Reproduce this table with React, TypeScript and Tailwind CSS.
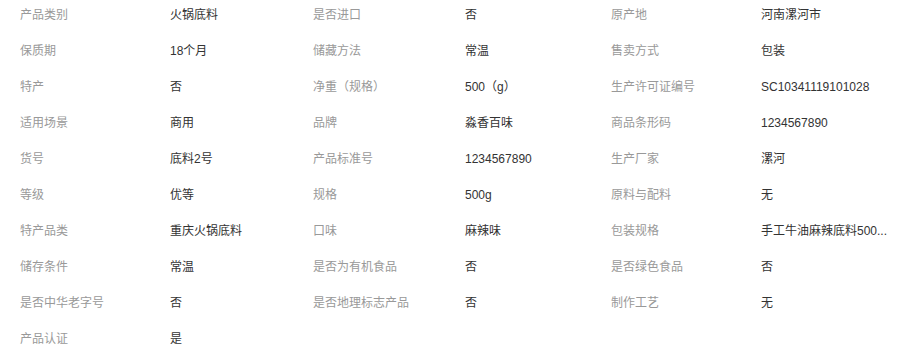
const rows: [string, string, string, string, string, string][] = [
  ["产品类别", "火锅底料", "是否进口", "否", "原产地", "河南漯河市"],
  ["保质期", "18个月", "储藏方法", "常温", "售卖方式", "包装"],
  ["特产", "否", "净重（规格）", "500（g）", "生产许可证编号", "SC10341119101028"],
  ["适用场景", "商用", "品牌", "淼香百味", "商品条形码", "1234567890"],
  ["货号", "底料2号", "产品标准号", "1234567890", "生产厂家", "漯河"],
  ["等级", "优等", "规格", "500g", "原料与配料", "无"],
  ["特产品类", "重庆火锅底料", "口味", "麻辣味", "包装规格", "手工牛油麻辣底料500..."],
  ["储存条件", "常温", "是否为有机食品", "否", "是否绿色食品", "否"],
  ["是否中华老字号", "否", "是否地理标志产品", "否", "制作工艺", "无"],
  ["产品认证", "是", "", "", "", ""],
]

export default function App() {
  return (
    <div
      className="w-[914px] h-[363px] overflow-hidden bg-white text-[12px]"
      style={{ fontFamily: '"Liberation Sans", "Noto Sans CJK SC", sans-serif' }}
    >
      {rows.map((r, i) => (
        <div key={i} className="grid grid-cols-[150px_143px_152px_146px_150px_1fr] h-[36px]">
          {r.map((cell, j) => (
            <div
              key={j}
              className={
                "pl-5 pt-[7px] leading-[16px] whitespace-nowrap overflow-hidden " +
                (j % 2 === 0 ? "text-[#999]" : "text-[#333]")
              }
            >
              {cell}
            </div>
          ))}
        </div>
      ))}
    </div>
  )
}
